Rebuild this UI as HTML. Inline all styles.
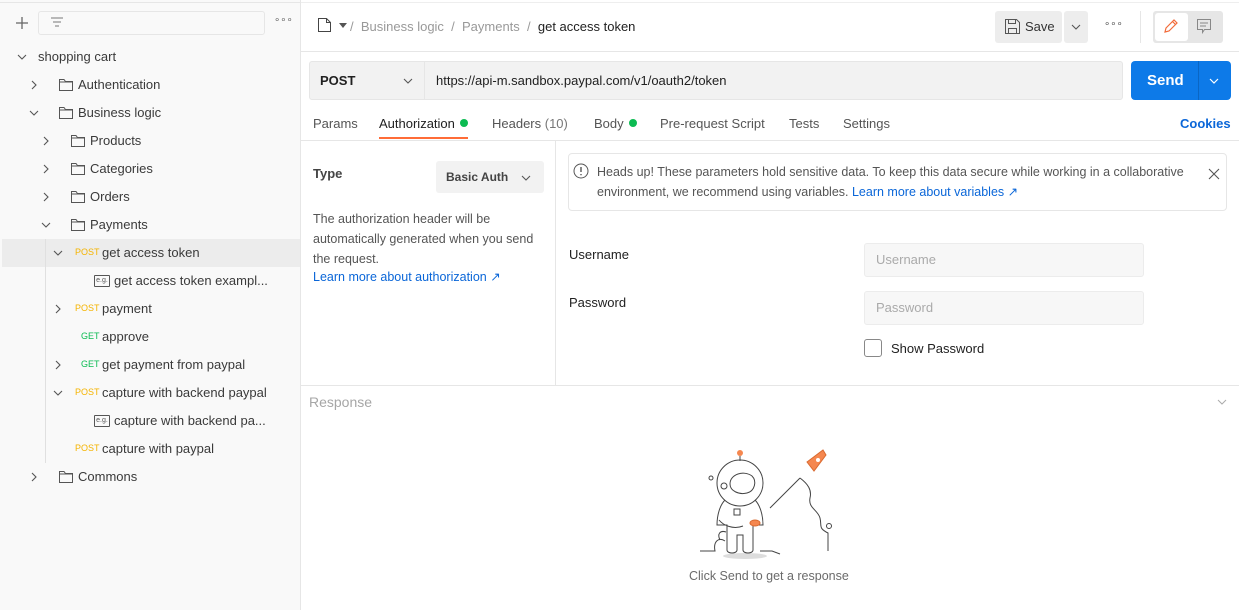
<!DOCTYPE html>
<html><head><meta charset="utf-8"><style>
*{box-sizing:border-box;margin:0;padding:0}
body{width:1239px;height:610px;overflow:hidden;font-family:"Liberation Sans",sans-serif;font-size:13px;color:#212121;background:#fff;position:relative}
.abs{position:absolute}
#side{position:absolute;left:0;top:0;width:301px;height:610px;background:#f9f9f9;border-right:1px solid #e6e6e6}
.row{position:absolute;left:0;width:300px;height:28px;line-height:29px;color:#3a3a3a;white-space:nowrap}
.chev{position:absolute;top:10px;width:10px;height:10px}
.fold{position:absolute;top:8px;width:14px;height:13px}
.m{position:absolute;font-size:9px;top:0}
.post{color:#f5b400}.get{color:#0cbb52}
.eg{position:absolute;top:9px;width:16px;height:12px;border:1px solid #555;border-radius:1px;font-size:7px;line-height:10px;text-align:center;color:#555}
.tab{position:absolute;top:116px;color:#555;font-size:13px}
.dot{display:inline-block;width:8px;height:8px;border-radius:50%;background:#0cbb52;margin-left:5px;vertical-align:1px}
.hl{position:absolute;background:#e6e6e6}
a{color:#0a66d8;text-decoration:none}
.inp{position:absolute;left:864px;width:280px;height:34px;background:#f7f7f7;border:1px solid #ececec;border-radius:3px;color:#aaa;padding-left:11px;line-height:32px}
</style></head><body>
<div id="side">
  <div class="abs" style="left:0;top:0;width:300px;height:3px;border-bottom:1px solid #e6e6e6;background:#f9f9f9"></div>
  <svg class="abs" style="left:15px;top:16px" width="14" height="14"><path d="M7 1v12M1 7h12" stroke="#666" stroke-width="1.3"/></svg>
  <div class="abs" style="left:38px;top:11px;width:227px;height:24px;border:1px solid #e6e6e6;border-radius:3px;background:#f9f9f9"></div>
  <svg class="abs" style="left:50px;top:16px" width="14" height="12"><path d="M1 2h12M3 6h8M5 10h4" stroke="#777" stroke-width="1"/></svg>
  <div class="abs" style="left:274px;top:15px;font-size:10px;color:#666;letter-spacing:0">∘∘∘</div>
</div>
<div class="abs" style="left:2px;top:239px;width:298px;height:28px;background:#ececec"></div>
<div class="abs" style="left:45px;top:239px;width:1px;height:224px;background:#e0e0e0"></div>
<svg width="0" height="0" style="position:absolute">
<defs>
<symbol id="cr" viewBox="0 0 10 10"><path d="M3 1l4 4-4 4" fill="none" stroke="#555" stroke-width="1.1"/></symbol>
<symbol id="cd" viewBox="0 0 10 10"><path d="M1 3l4 4 4-4" fill="none" stroke="#555" stroke-width="1.1"/></symbol>
<symbol id="fd" viewBox="0 0 14 13"><path d="M.5 1.5h4.5l1.5 2h7v9H.5zM.5 4h13" fill="none" stroke="#555" stroke-width="1"/></symbol>
</defs></svg>
<div class="row" style="top:42px"><svg class="chev" style="left:17px"><use href="#cd"/></svg><span class="abs" style="left:38px">shopping cart</span></div>
<div class="row" style="top:70px"><svg class="chev" style="left:29px"><use href="#cr"/></svg><svg class="fold" style="left:59px"><use href="#fd"/></svg><span class="abs" style="left:78px">Authentication</span></div>
<div class="row" style="top:98px"><svg class="chev" style="left:29px"><use href="#cd"/></svg><svg class="fold" style="left:59px"><use href="#fd"/></svg><span class="abs" style="left:78px">Business logic</span></div>
<div class="row" style="top:126px"><svg class="chev" style="left:41px"><use href="#cr"/></svg><svg class="fold" style="left:71px"><use href="#fd"/></svg><span class="abs" style="left:90px">Products</span></div>
<div class="row" style="top:154px"><svg class="chev" style="left:41px"><use href="#cr"/></svg><svg class="fold" style="left:71px"><use href="#fd"/></svg><span class="abs" style="left:90px">Categories</span></div>
<div class="row" style="top:182px"><svg class="chev" style="left:41px"><use href="#cr"/></svg><svg class="fold" style="left:71px"><use href="#fd"/></svg><span class="abs" style="left:90px">Orders</span></div>
<div class="row" style="top:210px"><svg class="chev" style="left:41px"><use href="#cd"/></svg><svg class="fold" style="left:71px"><use href="#fd"/></svg><span class="abs" style="left:90px">Payments</span></div>
<div class="row" style="top:238px"><svg class="chev" style="left:53px"><use href="#cd"/></svg><span class="m post" style="left:75px">POST</span><span class="abs" style="left:102px">get access token</span></div>
<div class="row" style="top:266px"><span class="eg" style="left:94px">e.g.</span><span class="abs" style="left:114px">get access token exampl...</span></div>
<div class="row" style="top:294px"><svg class="chev" style="left:53px"><use href="#cr"/></svg><span class="m post" style="left:75px">POST</span><span class="abs" style="left:102px">payment</span></div>
<div class="row" style="top:322px"><span class="m get" style="left:81px">GET</span><span class="abs" style="left:102px">approve</span></div>
<div class="row" style="top:350px"><svg class="chev" style="left:53px"><use href="#cr"/></svg><span class="m get" style="left:81px">GET</span><span class="abs" style="left:102px">get payment from paypal</span></div>
<div class="row" style="top:378px"><svg class="chev" style="left:53px"><use href="#cd"/></svg><span class="m post" style="left:75px">POST</span><span class="abs" style="left:102px">capture with backend paypal</span></div>
<div class="row" style="top:406px"><span class="eg" style="left:94px">e.g.</span><span class="abs" style="left:114px">capture with backend pa...</span></div>
<div class="row" style="top:434px"><span class="m post" style="left:75px">POST</span><span class="abs" style="left:102px">capture with paypal</span></div>
<div class="row" style="top:462px"><svg class="chev" style="left:29px"><use href="#cr"/></svg><svg class="fold" style="left:59px"><use href="#fd"/></svg><span class="abs" style="left:78px">Commons</span></div>

<div class="hl" style="left:301px;top:0;width:938px;height:3px;background:#fff;border-bottom:1px solid #eee"></div>
<svg class="abs" style="left:318px;top:18px" width="30" height="15"><path d="M.5 .5h8l4 4v9H.5z" fill="none" stroke="#444"/><path d="M8.5 .5v4h4" fill="none" stroke="#444"/><path d="M21 5h8l-4 5z" fill="#555"/></svg>
<div class="abs" style="left:350px;top:19px;color:#999">/ &nbsp;Business logic &nbsp;/ &nbsp;Payments &nbsp;/ &nbsp;<span style="color:#212121">get access token</span></div>
<div class="abs" style="left:995px;top:11px;width:67px;height:32px;background:#ededed;border-radius:3px"></div>
<svg class="abs" style="left:1005px;top:19px" width="15" height="15"><path d="M.5 .5h11l3 3v11H.5z M3.5 .5v4h7v-4 M3.5 14.5v-5h8v5" fill="none" stroke="#555"/></svg>
<div class="abs" style="left:1025px;top:19px;color:#333">Save</div>
<div class="abs" style="left:1064px;top:11px;width:24px;height:32px;background:#ededed;border-radius:3px"></div>
<svg class="abs" style="left:1071px;top:22px" width="10" height="10"><use href="#cd"/></svg>
<div class="abs" style="left:1104px;top:19px;font-size:10px;color:#555">∘∘∘</div>
<div class="hl" style="left:1140px;top:11px;width:1px;height:32px"></div>
<div class="abs" style="left:1153px;top:11px;width:70px;height:32px;background:#e6e6e6;border-radius:3px"></div>
<div class="abs" style="left:1155px;top:13px;width:33px;height:28px;background:#fff;border-radius:3px"></div>
<svg class="abs" style="left:1163px;top:18px" width="16" height="16"><path d="M2 14l1-4 8-8 3 3-8 8zM9.5 3.5l3 3" fill="none" stroke="#f26b3a" stroke-width="1.2"/></svg>
<svg class="abs" style="left:1197px;top:19px" width="15" height="15"><path d="M.5 .5h13v10h-6l-2 3v-3h-5z M3 4h8M3 7h6" fill="none" stroke="#888"/></svg>
<div class="hl" style="left:301px;top:51px;width:938px;height:1px"></div>

<div class="abs" style="left:309px;top:61px;width:814px;height:39px;background:#f2f2f2;border:1px solid #e6e6e6;border-radius:3px"></div>
<div class="hl" style="left:424px;top:62px;width:1px;height:37px"></div>
<div class="abs" style="left:320px;top:73px;font-weight:bold;color:#212121">POST</div>
<svg class="abs" style="left:403px;top:76px" width="10" height="10"><use href="#cd"/></svg>
<div class="abs" style="left:436px;top:73px;color:#212121">https://api-m.sandbox.paypal.com/v1/oauth2/token</div>
<div class="abs" style="left:1131px;top:61px;width:100px;height:39px;background:#0d7ae8;border-radius:4px"></div>
<div class="abs" style="left:1198px;top:61px;width:1px;height:39px;background:#0a66c4"></div>
<div class="abs" style="left:1147px;top:72px;color:#fff;font-weight:bold;font-size:15px">Send</div>
<svg class="abs" style="left:1209px;top:76px" width="10" height="10"><path d="M1 3l4 4 4-4" fill="none" stroke="#fff" stroke-width="1.2"/></svg>

<div class="tab" style="left:313px">Params</div>
<div class="tab" style="left:379px;color:#212121">Authorization<span class="dot"></span></div>
<div class="abs" style="left:379px;top:137px;width:89px;height:2px;background:#ff6c37"></div>
<div class="tab" style="left:492px">Headers <span style="color:#777">(10)</span></div>
<div class="tab" style="left:594px">Body<span class="dot"></span></div>
<div class="tab" style="left:660px">Pre-request Script</div>
<div class="tab" style="left:789px">Tests</div>
<div class="tab" style="left:843px">Settings</div>
<div class="tab" style="left:1180px;color:#0a66d8;font-weight:bold">Cookies</div>
<div class="hl" style="left:301px;top:140px;width:938px;height:1px"></div>

<div class="abs" style="left:313px;top:166px;font-weight:bold;color:#444">Type</div>
<div class="abs" style="left:436px;top:161px;width:108px;height:32px;background:#f2f2f2;border-radius:3px"></div>
<div class="abs" style="left:446px;top:170px;font-size:12px;font-weight:bold;color:#444">Basic Auth</div>
<svg class="abs" style="left:521px;top:173px" width="10" height="10"><use href="#cd"/></svg>
<div class="abs" style="left:313px;top:209px;width:240px;line-height:20px;color:#555;font-size:12.5px">The authorization header will be automatically generated when you send the request.</div>
<div class="abs" style="left:313px;top:269px;font-size:12.5px"><a>Learn more about authorization ↗</a></div>
<div class="hl" style="left:555px;top:141px;width:1px;height:244px"></div>

<div class="abs" style="left:568px;top:153px;width:659px;height:58px;border:1px solid #e6e6e6;border-radius:4px"></div>
<svg class="abs" style="left:573px;top:163px" width="16" height="16"><circle cx="8" cy="8" r="7" fill="none" stroke="#555"/><path d="M8 4v5M8 11v1.2" stroke="#555" stroke-width="1.4"/></svg>
<div class="abs" style="left:597px;top:162px;width:610px;line-height:20px;color:#555;font-size:12.5px">Heads up! These parameters hold sensitive data. To keep this data secure while working in a collaborative environment, we recommend using variables. <a>Learn more about variables ↗</a></div>
<svg class="abs" style="left:1208px;top:168px" width="12" height="12"><path d="M1 1l10 10M11 1L1 11" stroke="#555" stroke-width="1.1"/></svg>

<div class="abs" style="left:569px;top:247px;color:#212121">Username</div>
<div class="abs" style="left:569px;top:295px;color:#212121">Password</div>
<div class="inp" style="top:243px">Username</div>
<div class="inp" style="top:291px">Password</div>
<div class="abs" style="left:864px;top:339px;width:18px;height:18px;border:1px solid #888;border-radius:3px"></div>
<div class="abs" style="left:891px;top:341px;color:#212121">Show Password</div>

<div class="hl" style="left:301px;top:385px;width:938px;height:1px"></div>
<div class="abs" style="left:309px;top:394px;font-size:14px;color:#a6a6a6">Response</div>
<svg class="abs" style="left:1217px;top:397px" width="10" height="10"><path d="M1 3l4 4 4-4" fill="none" stroke="#aaa" stroke-width="1"/></svg>

<svg class="abs" style="left:695px;top:448px" width="150" height="115" fill="none" stroke="#444" stroke-width="1">
<ellipse cx="50" cy="108" rx="22" ry="3" fill="#ddd" stroke="none"/>
<circle cx="45" cy="5" r="3" fill="#f5874f" stroke="none"/>
<path d="M45 8v5"/>
<circle cx="45" cy="35" r="23"/>
<path d="M35 36c0-10 14-14 22-8 5 5 3 15-5 17-8 2-17-2-17-9z"/>
<circle cx="29" cy="38" r="3"/><circle cx="16" cy="30" r="2"/><circle cx="134" cy="78" r="2.5"/>
<path d="M30 52c-5 5-8 15-8 25h10v25c0 4 10 4 10 0v-15h6v15c0 4 10 4 10 0v-25h10c0-10-3-20-8-25"/>
<rect x="39" y="61" width="6" height="6"/>
<path d="M24 72c4 5 14 10 24 6"/>
<ellipse cx="60" cy="75" rx="5" ry="3" fill="#f5874f" stroke="#d96a30"/>
<path d="M5 103h15c-2-10 4-14 10-10M65 103h12l8 3M75 60l30-30"/>
<path d="M105 30c8 6 12 12 10 20-2 10 8 12 10 20s-2 10 8 15v18"/>
<path d="M112 14l16-12 3 5-12 16z" fill="#f5874f" stroke="#d96a30"/>
<circle cx="123" cy="12" r="2" fill="#fff" stroke="none"/>
<path d="M25 92c-3-6 0-10 6-8" />
</svg>
<div class="abs" style="left:689px;top:569px;font-size:12.5px;color:#6b6b6b">Click Send to get a response</div>
</body></html>
